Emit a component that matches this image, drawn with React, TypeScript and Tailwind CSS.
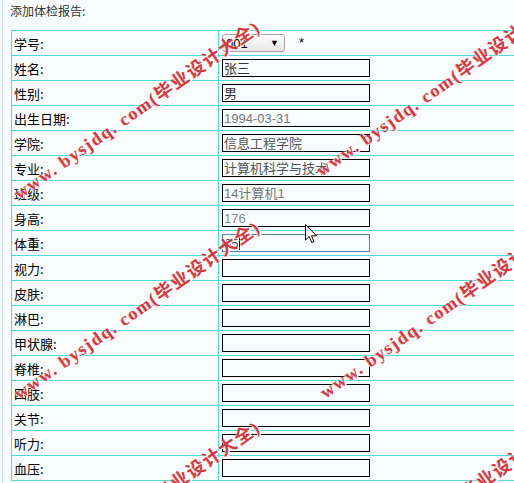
import React from 'react';

interface Row {
  label: string;
  value?: string;
  color?: string;
  kind?: 'select' | 'input' | 'focus';
}

const rows: Row[] = [
  { label: '学号', kind: 'select' },
  { label: '姓名', value: '张三', color: '#333' },
  { label: '性别', value: '男', color: '#333' },
  { label: '出生日期', value: '1994-03-31', color: '#777' },
  { label: '学院', value: '信息工程学院', color: '#555' },
  { label: '专业', value: '计算机科学与技术', color: '#555' },
  { label: '班级', value: '14计算机1', color: '#777' },
  { label: '身高', value: '176', color: '#888' },
  { label: '体重', value: '65', color: '#555', kind: 'focus' },
  { label: '视力' },
  { label: '皮肤' },
  { label: '淋巴' },
  { label: '甲状腺' },
  { label: '脊椎' },
  { label: '四肢' },
  { label: '关节' },
  { label: '听力' },
  { label: '血压' },
];

// watermark start points (left end of the text line)
const marks = [
  { x: 16, y: 195 },
  { x: 16, y: 395 },
  { x: 16, y: 595 },
  { x: 318, y: 172 },
  { x: 322, y: 394 },
  { x: 322, y: 594 },
];

const SelectBox = () => (
  <div className="flex items-center gap-[14px]">
    <div className="flex h-[18px] w-[63px] items-center justify-between rounded-[3px] border border-[#a6a6a6] bg-gradient-to-b from-white to-[#e6e6e6] pl-[3px] pr-[5px] font-['Liberation_Sans',sans-serif] text-[13px] leading-none text-black">
      <span>001</span>
      <span className="text-[9px]">▼</span>
    </div>
    <span className="font-['Liberation_Sans',sans-serif] text-[13px] text-black">*</span>
  </div>
);

const Field = ({ row }: { row: Row }) => {
  const focused = row.kind === 'focus';
  return (
    <div
      className={
        focused
          ? 'relative flex h-[18px] w-[148px] items-center border border-[#5b80aa] bg-[#f8fcfc] px-[1px]'
          : 'flex h-[18px] w-[148px] items-center border border-black bg-[#f8fcfc] px-[1px]'
      }
    >
      <span
        className="font-['Liberation_Sans','Noto_Sans_CJK_SC',sans-serif] text-[13px] leading-none"
        style={{ color: row.color }}
      >
        {row.value}
      </span>
      {focused && <span className="ml-[1px] h-[13px] w-px bg-black" />}
    </div>
  );
};

export default function App() {
  return (
    <div className="relative h-[483px] w-[514px] overflow-hidden bg-[#f8fcfc]">
      <div className="ml-[2px] h-full border-l border-[#d3dde6]">
        <div className="pl-[7px] pt-[3px] font-['Noto_Sans_CJK_SC',sans-serif] text-[12px] leading-[16px] text-[#333]">
          添加体检报告:
        </div>
        <div className="mt-[11px] pl-[8px]">
          <table className="w-[560px] border-collapse">
            <tbody>
              {rows.map((row) => (
                <tr key={row.label} className="h-[25px]">
                  <td className="w-[207px] border border-[#4fd9df] p-0 pl-[2px] font-['Noto_Sans_CJK_SC',sans-serif] text-[13px] leading-none text-black">
                    {row.label}:
                  </td>
                  <td className="border border-[#4fd9df] p-0 pl-[3px]">
                    {row.kind === 'select' ? <SelectBox /> : <Field row={row} />}
                  </td>
                </tr>
              ))}
            </tbody>
          </table>
        </div>
      </div>

      {marks.map((m, i) => (
        <span
          key={i}
          className="pointer-events-none absolute origin-left rotate-[-35deg] whitespace-pre font-['Liberation_Serif','Noto_Sans_CJK_SC',serif] text-[18px] font-bold leading-[20px] tracking-[1.5px] text-[#d33a3f] [text-shadow:1px_1px_0_#fff,-1px_0_0_#f6d6d6]"
          style={{ left: m.x, top: m.y - 10 }}
        >
          www. bysjdq. com(毕业设计大全)
        </span>
      ))}

      <svg className="absolute left-[305px] top-[224px]" width="13" height="20" viewBox="0 0 13 20">
        <path d="M0.5 0.5 L0.5 16 L4.2 12.5 L6.8 18.6 L9 17.6 L6.5 11.8 L11.5 11.8 Z" fill="#fff" stroke="#000" strokeWidth="1" />
      </svg>
    </div>
  );
}
